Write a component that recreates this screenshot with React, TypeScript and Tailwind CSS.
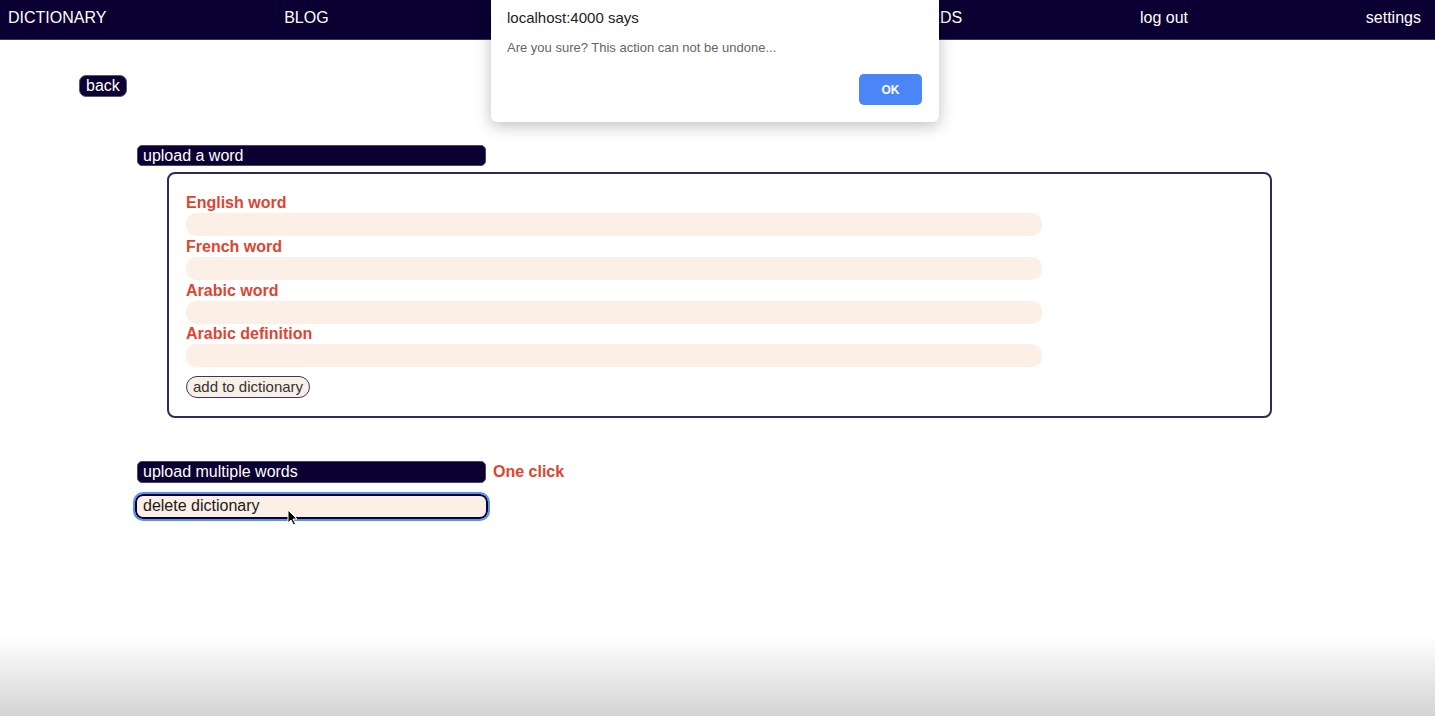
import React from "react";

const font = { fontFamily: '"Liberation Sans", Arial, sans-serif' };

function Field({ label }: { label: string }) {
  return (
    <div className="flex flex-col">
      <label className="h-[21px] leading-[21px] text-[16px] font-bold text-[#de4530]">{label}</label>
      <div className="h-[23px] w-[856px] rounded-[10px] bg-[#fcf0e6]" />
    </div>
  );
}

export default function App() {
  return (
    <div className="relative min-h-screen h-[716px] overflow-hidden bg-white" style={font}>
      {/* nav */}
      <nav className="flex h-[40px] items-center justify-between border-b border-[#3a3566] bg-[#0a0032] pb-[4px] pl-[8px] pr-[14px] text-[16px] text-white">
        <span>DICTIONARY</span>
        <span>BLOG</span>
        <span className="w-[188px]" aria-hidden="true" />
        <span className="w-[90px] text-right">MY WORDS</span>
        <span>log out</span>
        <span>settings</span>
      </nav>

      <main className="flex flex-col items-start">
        <button className="ml-[79px] mt-[35px] flex h-[22px] items-center rounded-[7px] border border-[#5b5780] bg-[#0a0032] px-[6px] text-[16px] text-white">
          back
        </button>

        <div className="ml-[137px] mt-[48px] flex flex-col items-start">
          <div className="flex h-[21px] w-[349px] items-center rounded-[5px] border border-[#4a4670] bg-[#0a0032] pl-[5px] text-[16px] text-white">
            upload a word
          </div>

          <div className="ml-[30px] mt-[6px] h-[246px] w-[1105px] rounded-[8px] border-2 border-[#2e2a5a] pl-[17px] pt-[18px]">
            <div className="flex flex-col">
              <Field label="English word" />
              <Field label="French word" />
              <Field label="Arabic word" />
              <div className="-mt-[1px]">
                <Field label="Arabic definition" />
              </div>
            </div>
            <button className="mt-[9px] flex h-[22px] items-center rounded-full border border-[#3a3660] bg-[#f8efe6] px-[6px] text-[15px] text-[#333]">
              add to dictionary
            </button>
          </div>

          <div className="mt-[42px] flex items-center">
            <div className="flex h-[22px] w-[349px] items-center rounded-[5px] border border-[#4a4670] bg-[#0a0032] pl-[5px] text-[16px] text-white">
              upload multiple words
            </div>
            <span className="ml-[7px] text-[16px] font-bold text-[#de4530]">One click</span>
          </div>

          <button className="-ml-[2px] mt-[10px] flex h-[25px] w-[353px] items-center rounded-[8px] border-2 border-[#0a0032] bg-[#fcefe6] pl-[6px] pb-[2px] text-[16px] text-[#1a1a1a] outline-2 outline-offset-0 outline-[#5a93ee] outline">
            delete dictionary
          </button>
        </div>
      </main>

      {/* mouse cursor */}
      <svg className="absolute left-[287px] top-[509px]" width="11" height="17" viewBox="0 0 11 17">
        <path d="M1 1 L1 14 L4 11 L6.5 16 L8.5 15 L6 10 L10 10 Z" fill="#000" stroke="#fff" strokeWidth="1" />
      </svg>

      {/* alert dialog */}
      <div className="absolute left-[491px] top-0 h-[122px] w-[448px] rounded-b-[6px] bg-white shadow-[0_4px_16px_rgba(0,0,0,0.25)]">
        <div className="pl-[16px] pt-[9px] text-[15px] leading-[18px] text-[#222]">localhost:4000 says</div>
        <div className="pl-[16px] pt-[13px] text-[13px] leading-[16px] text-[#666]">
          Are you sure? This action can not be undone...
        </div>
        <button className="absolute right-[17px] top-[74px] flex h-[31px] w-[63px] items-center justify-center rounded-[5px] bg-[#4a86f7] text-[12px] font-bold text-white">
          OK
        </button>
      </div>

      {/* bottom fade */}
      <div className="pointer-events-none absolute inset-x-0 bottom-0 h-[80px] bg-gradient-to-b from-white/0 to-[#d4d4d4]" />
    </div>
  );
}
